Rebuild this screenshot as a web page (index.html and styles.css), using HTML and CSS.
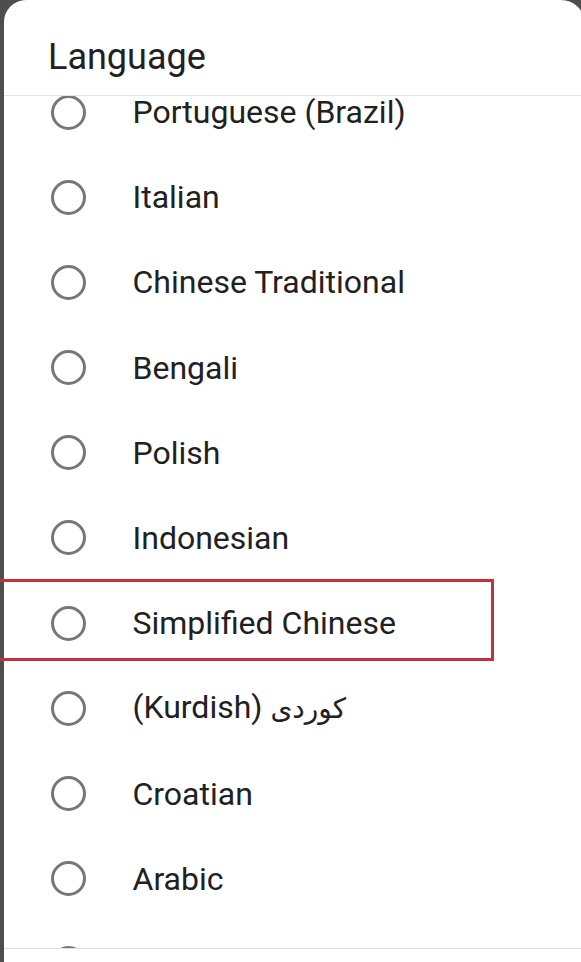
FILE: index.html
```html
<!DOCTYPE html>
<html lang="en">
<head>
<meta charset="utf-8">
<title>Language</title>
<link rel="stylesheet" href="styles.css">
</head>
<body>
<div class="dialog">
  <div class="title">Language</div>
  <div class="viewport">
    <ul class="list">
      <li class="row"><span class="radio"></span><span class="label">Portuguese (Brazil)</span></li>
      <li class="row"><span class="radio"></span><span class="label">Italian</span></li>
      <li class="row"><span class="radio"></span><span class="label">Chinese Traditional</span></li>
      <li class="row"><span class="radio"></span><span class="label">Bengali</span></li>
      <li class="row"><span class="radio"></span><span class="label">Polish</span></li>
      <li class="row"><span class="radio"></span><span class="label">Indonesian</span></li>
      <li class="row"><span class="radio"></span><span class="label">Simplified Chinese</span></li>
      <li class="row"><span class="radio"></span><span class="label">(Kurdish) <span class="ar" dir="rtl">کوردی</span></span></li>
      <li class="row"><span class="radio"></span><span class="label">Croatian</span></li>
      <li class="row"><span class="radio"></span><span class="label">Arabic</span></li>
      <li class="row"><span class="radio"></span></li>
    </ul>
  </div>
  <div class="footer"></div>
</div>
<div class="highlight"></div>
</body>
</html>
```

FILE: styles.css
```css
html, body {
  margin: 0;
  padding: 0;
  height: 962px;
  overflow: hidden;
}
body {
  background: #4e4e4e;
  position: relative;
  font-family: Roboto, "Noto Sans", "DejaVu Sans", sans-serif;
  color: #212121;
}
.dialog {
  margin-left: 4px;
  width: 581px;
  height: 962px;
  background: #ffffff;
  border-radius: 22px 24px 0 0;
  display: flex;
  flex-direction: column;
  overflow: hidden;
}
.title {
  flex: 0 0 auto;
  height: 96px;
  box-sizing: border-box;
  padding: 36px 0 0 44px;
  font-size: 36px;
  line-height: 42px;
  border-bottom: 1px solid #e3e3e3;
}
.viewport {
  flex: 0 0 auto;
  height: 852px;
  overflow: hidden;
}
.list {
  list-style: none;
  margin: -26.6px 0 0 0;
  padding: 0;
}
.row {
  height: 85.2px;
  display: flex;
  align-items: center;
  padding-left: 46.5px;
}
.radio {
  flex: 0 0 auto;
  width: 35px;
  height: 35px;
  box-sizing: border-box;
  border: 3px solid #777777;
  border-radius: 50%;
}
.label {
  margin-left: 47px;
  font-size: 32px;
  line-height: 30px;
  white-space: nowrap;
}
.ar {
  font-family: "DejaVu Sans", sans-serif;
  font-size: 28px;
  unicode-bidi: isolate;
}
.footer {
  flex: 1 1 auto;
  border-top: 1px solid #e0e0e0;
}
.highlight {
  position: absolute;
  left: -10px;
  top: 579px;
  width: 504px;
  height: 82px;
  box-sizing: border-box;
  border: 3px solid #c4303b;
}
```
